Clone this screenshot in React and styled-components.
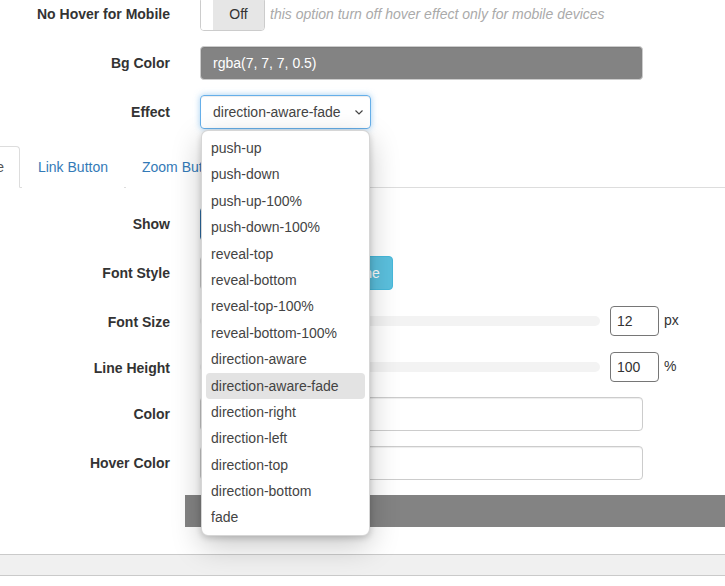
import React from 'react';
import styled, { createGlobalStyle } from 'styled-components';

const effects = [
  'push-up',
  'push-down',
  'push-up-100%',
  'push-down-100%',
  'reveal-top',
  'reveal-bottom',
  'reveal-top-100%',
  'reveal-bottom-100%',
  'direction-aware',
  'direction-aware-fade',
  'direction-right',
  'direction-left',
  'direction-top',
  'direction-bottom',
  'fade',
];

const selected = 'direction-aware-fade';

function App() {
  return (
    <>
      <GlobalStyle />
      <Page>
        <Form>
          <Row>
            <Label>No Hover for Mobile</Label>
            <Control>
              <Toggle>
                <Knob />
                <ToggleText>Off</ToggleText>
              </Toggle>
              <Help>this option turn off hover effect only for mobile devices</Help>
            </Control>
          </Row>
          <Row>
            <Label>Bg Color</Label>
            <Control>
              <TextInput $bg="rgba(7, 7, 7, 0.5)" $color="#fff">rgba(7, 7, 7, 0.5)</TextInput>
            </Control>
          </Row>
          <Row>
            <Label>Effect</Label>
            <Control>
              <SelectWrap>
                <SelectBox>
                  {selected}
                  <Chevron viewBox="0 0 8 5">
                    <path d="M0.5 0.5 L4 4 L7.5 0.5" fill="none" stroke="#444" strokeWidth="1.2" />
                  </Chevron>
                </SelectBox>
                <Menu>
                  {effects.map((e) => (
                    <MenuItem key={e} $active={e === selected}>
                      {e}
                    </MenuItem>
                  ))}
                </Menu>
              </SelectWrap>
            </Control>
          </Row>
        </Form>

        <Tabs>
          <Tab $active>Title</Tab>
          <Tab>Link Button</Tab>
          <Tab>Zoom Button</Tab>
        </Tabs>

        <TabContent>
          <Row>
            <Label>Show</Label>
            <Control>
              <Toggle $on>
                <ToggleText $on>On</ToggleText>
                <Knob />
              </Toggle>
            </Control>
          </Row>
          <Row>
            <Label>Font Style</Label>
            <Control>
              <BtnGroup>
                <GroupBtn>Bold</GroupBtn>
                <GroupBtn>Italic</GroupBtn>
                <GroupBtn $active>Underline</GroupBtn>
              </BtnGroup>
            </Control>
          </Row>
          <Row>
            <Label>Font Size</Label>
            <Control>
              <Slider>
                <Track />
              </Slider>
              <NumberBox>12</NumberBox>
              <Unit>px</Unit>
            </Control>
          </Row>
          <Row>
            <Label>Line Height</Label>
            <Control>
              <Slider>
                <Track />
              </Slider>
              <NumberBox>100</NumberBox>
              <Unit>%</Unit>
            </Control>
          </Row>
          <Row>
            <Label>Color</Label>
            <Control>
              <TextInput />
            </Control>
          </Row>
          <Row>
            <Label>Hover Color</Label>
            <Control>
              <TextInput />
            </Control>
          </Row>
          <Preview />
        </TabContent>

        <Footer />
      </Page>
    </>
  );
}

export default App;

const GlobalStyle = createGlobalStyle`
  * { box-sizing: border-box; }
  html, body {
    margin: 0;
    padding: 0;
    background: #fff;
    overflow: hidden;
  }
  body {
    font-family: 'Liberation Sans', Arial, sans-serif;
    font-size: 14px;
    line-height: 20px;
    color: #333;
  }
`;

const Page = styled.div`
  width: 725px;
  height: 586px;
  overflow: hidden;
  margin-top: -3px;
`;

const Form = styled.div``;

const Row = styled.div`
  display: grid;
  grid-template-columns: 170px 1fr;
  column-gap: 30px;
  align-items: start;
  margin-bottom: 15px;
`;

const Label = styled.div`
  padding-top: 7px;
  text-align: right;
  font-weight: bold;
  color: #333;
`;

const Control = styled.div`
  display: flex;
  align-items: center;
`;

const Toggle = styled.div`
  display: flex;
  width: 65px;
  height: 34px;
  border: 1px solid ${(p) => (p.$on ? '#2e6da4' : '#ccc')};
  border-radius: 4px;
  overflow: hidden;
  background: #fff;
`;

const Knob = styled.div`
  width: 12px;
  background: #fff;
`;

const ToggleText = styled.div`
  flex: 1;
  display: flex;
  align-items: center;
  justify-content: center;
  background: ${(p) => (p.$on ? '#337ab7' : '#e6e6e6')};
  color: ${(p) => (p.$on ? '#fff' : '#333')};
`;

const Help = styled.span`
  margin-left: 5px;
  font-style: italic;
  color: #aaa;
  white-space: nowrap;
`;

const TextInput = styled.div`
  width: 443px;
  height: 34px;
  padding: 6px 12px;
  border: 1px solid #ccc;
  border-radius: 4px;
  background: ${(p) => p.$bg || '#fff'};
  color: ${(p) => p.$color || '#555'};
  box-shadow: inset 0 1px 1px rgba(0, 0, 0, 0.075);
`;

const SelectWrap = styled.div`
  position: relative;
`;

const SelectBox = styled.div`
  width: 171px;
  height: 34px;
  padding: 6px 12px;
  display: flex;
  align-items: center;
  justify-content: space-between;
  border: 1px solid #66afe9;
  border-radius: 4px;
  color: #444;
  box-shadow: inset 0 1px 1px rgba(0, 0, 0, 0.075), 0 0 6px rgba(102, 175, 233, 0.6);
`;

const Chevron = styled.svg`
  width: 8px;
  height: 5px;
  margin-right: -5px;
`;

const Menu = styled.div`
  position: absolute;
  top: 35px;
  left: 1px;
  width: 169px;
  padding: 4px;
  background: #fff;
  border: 1px solid rgba(0, 0, 0, 0.16);
  border-radius: 7px;
  box-shadow: 0 10px 30px rgba(0, 0, 0, 0.22), 0 2px 6px rgba(0, 0, 0, 0.18);
  z-index: 10;
`;

const MenuItem = styled.div`
  height: 26.4px;
  line-height: 26.4px;
  padding: 0 5px;
  border-radius: 4px;
  color: #444;
  white-space: nowrap;
  background: ${(p) => (p.$active ? '#e3e3e3' : 'transparent')};
`;

const Tabs = styled.div`
  display: flex;
  margin-left: -38px;
  margin-top: 17px;
  border-bottom: 1px solid #ddd;
`;

const Tab = styled.div`
  padding: 10px 15px;
  margin-right: 2px;
  margin-bottom: -1px;
  border: 1px solid ${(p) => (p.$active ? '#ddd' : 'transparent')};
  border-bottom-color: transparent;
  border-radius: 4px 4px 0 0;
  background: #fff;
  color: ${(p) => (p.$active ? '#555' : '#337ab7')};
  white-space: nowrap;
`;

const TabContent = styled.div`
  padding-top: 19px;
`;

const BtnGroup = styled.div`
  display: flex;
`;

const GroupBtn = styled.div`
  height: 34px;
  padding: 6px 12px;
  margin-left: -1px;
  border: 1px solid ${(p) => (p.$active ? '#46b8da' : '#ccc')};
  background: ${(p) => (p.$active ? '#5bc0de' : '#fff')};
  color: ${(p) => (p.$active ? '#fff' : '#333')};

  &:first-child {
    margin-left: 0;
    border-radius: 4px 0 0 4px;
  }
  &:last-child {
    border-radius: 0 4px 4px 0;
  }
`;

const Slider = styled.div`
  width: 400px;
  height: 31px;
  display: flex;
  align-items: center;
`;

const Track = styled.div`
  width: 100%;
  height: 10px;
  border-radius: 5px;
  background: #f3f3f3;
`;

const NumberBox = styled.div`
  width: 49px;
  height: 30px;
  margin-left: 10px;
  margin-top: 1px;
  align-self: flex-start;
  padding: 4px 6px;
  border: 1px solid #767676;
  border-radius: 4px;
  color: #333;
`;

const Unit = styled.span`
  margin-left: 5px;
  align-self: flex-start;
  margin-top: 5px;
  color: #333;
`;

const Preview = styled.div`
  margin-left: 185px;
  height: 32px;
  background: #838383;
`;

const Footer = styled.div`
  margin-top: 27px;
  height: 22px;
  border-top: 1px solid #cacaca;
  border-bottom: 1px solid #cacaca;
  background: #f0f0f0;
`;
